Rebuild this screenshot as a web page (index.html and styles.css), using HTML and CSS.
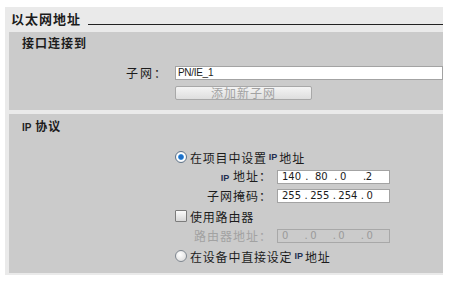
FILE: index.html
```html
<!DOCTYPE html>
<html lang="zh-CN">
<head>
  <meta charset="UTF-8">
  <meta name="viewport" content="width=device-width, initial-scale=1.0">
  <title>以太网地址</title>
  <link rel="stylesheet" href="styles.css">
</head>
<body>
  <div class="panel">
    <div class="legend">
      <span class="legend-title">以太网地址</span>
      <span class="legend-line"></span>
    </div>

    <section class="group group-port">
      <div class="group-title">接口连接到</div>
      <div class="subnet-row">
        <span class="subnet-label">子网：</span>
        <div class="text-input wide">PN/IE_1</div>
      </div>
      <div class="add-btn">添加新子网</div>
    </section>

    <section class="group group-ip">
      <div class="group-title"><span class="ip">IP</span> 协议</div>
      <div class="options">
        <div class="choice"><span class="radio checked"></span>在项目中设置 <span class="ip">IP</span> 地址</div>
        <div class="field">
          <span class="field-label"><span class="ip">IP</span> 地址：</span>
          <div class="ip-input">
            <span class="seg">140</span><span class="dot">.</span>
            <span class="seg seg-shift">80</span><span class="dot">.</span>
            <span class="seg">0</span><span class="dot">.</span>
            <span class="seg seg-tight">2</span>
          </div>
        </div>
        <div class="field">
          <span class="field-label">子网掩码：</span>
          <div class="ip-input">
            <span class="seg">255</span><span class="dot">.</span>
            <span class="seg">255</span><span class="dot">.</span>
            <span class="seg">254</span><span class="dot">.</span>
            <span class="seg">0</span>
          </div>
        </div>
        <div class="choice"><span class="checkbox"></span>使用路由器</div>
        <div class="field disabled">
          <span class="field-label">路由器地址：</span>
          <div class="ip-input">
            <span class="seg">0</span><span class="dot">.</span>
            <span class="seg">0</span><span class="dot">.</span>
            <span class="seg">0</span><span class="dot">.</span>
            <span class="seg">0</span>
          </div>
        </div>
        <div class="choice"><span class="radio"></span>在设备中直接设定 <span class="ip">IP</span> 地址</div>
      </div>
    </section>
  </div>
</body>
</html>
```

FILE: styles.css
```css
:root {
  --panel-bg: #eaeaea;
  --group-bg: #cbcbcb;
  --text-color: #1c1c1c;
  --muted: #a2a2a2;
  --field-border: #a3a3a3;
}

body {
  margin: 0;
  background: #fff;
  color: var(--text-color);
  font-family: "Noto Sans CJK SC", "Noto Sans", sans-serif;
  font-size: 12px;
}

.panel {
  margin: 7px 0 0 5px;
  width: 438px;
  padding: 0 0 2px 4px;
  box-sizing: border-box;
  background: var(--panel-bg);
}

/* Titel mit Linie */
.legend {
  display: flex;
  align-items: flex-start;
  height: 25px;
  padding-top: 4px;
  box-sizing: border-box;
}

.legend-title {
  margin-left: 2px;
  font-size: 13px;
  font-weight: bold;
  line-height: 16px;
  letter-spacing: 1px;
}

.legend-line {
  flex: 1;
  height: 1px;
  margin: 13px 0 0 7px;
  background: #222;
}

.group {
  background: var(--group-bg);
}

.group-port {
  padding: 3px 0 10px;
}

.group-ip {
  margin-top: 4px;
  padding: 4px 0 9px;
}

.group-title {
  padding-left: 13px;
  font-weight: bold;
  line-height: 16px;
  letter-spacing: 1px;
}

.ip {
  font-family: "Liberation Sans", Arial, sans-serif;
  font-size: 9px;
  font-weight: bold;
  color: #1f2f52;
  letter-spacing: 0;
}

.group-title .ip {
  font-size: 10px;
  color: #222;
}

.subnet-row {
  display: flex;
  align-items: center;
  margin-top: 15px;
  height: 14px;
}

.subnet-label {
  width: 159px;
  margin-right: 7px;
  text-align: right;
  line-height: 14px;
  letter-spacing: 2px;
}

.text-input {
  height: 14px;
  box-sizing: border-box;
  border: 1px solid var(--field-border);
  background: #fff;
  padding-left: 2px;
  font-family: "Liberation Sans", Arial, sans-serif;
  font-size: 10px;
  line-height: 12px;
  letter-spacing: -0.3px;
}

.text-input.wide {
  flex: 1;
}

.add-btn {
  width: 137px;
  height: 14px;
  margin: 6px 0 0 166px;
  box-sizing: border-box;
  border: 1px solid #a8a8a8;
  border-radius: 2px;
  background: linear-gradient(#f4f4f4, #dedede);
  color: var(--muted);
  text-align: center;
  font-size: 12px;
  line-height: 12px;
  letter-spacing: 1px;
}

.options {
  display: flex;
  flex-direction: column;
  gap: 5px;
  margin: 13px 0 0 166px;
}

.choice {
  display: flex;
  align-items: center;
  height: 16px;
  letter-spacing: 0.8px;
}

.choice .ip {
  margin: 0 2px;
}

.radio,
.checkbox {
  width: 12px;
  height: 12px;
  margin-right: 3px;
  box-sizing: border-box;
  flex: none;
}

.radio {
  border: 1px solid #7f8790;
  border-radius: 50%;
  background: radial-gradient(circle at 40% 35%, #ffffff, #d6d6d6);
}

.radio.checked {
  border-color: #5f7388;
  background: radial-gradient(circle, #1f6fc6 0 2px, #4d9ee6 2.6px, #ffffff 3.3px, #e6ebf0 100%);
}

.checkbox {
  border: 1px solid #7c7c7c;
  border-radius: 1px;
  background: linear-gradient(#fbfbfb, #d7d7d7);
}

.field {
  display: flex;
  align-items: center;
  height: 14px;
}

.field-label {
  width: 97px;
  margin-right: 5px;
  text-align: right;
  line-height: 14px;
  letter-spacing: 1px;
}

.ip-input {
  display: flex;
  width: 113px;
  height: 14px;
  box-sizing: border-box;
  padding-left: 4px;
  border: 1px solid var(--field-border);
  background: #fff;
  font-family: "DejaVu Sans", sans-serif;
  font-size: 10px;
  line-height: 12px;
  white-space: nowrap;
}

.seg {
  width: 24px;
}

.seg-shift {
  padding-left: 4px;
  width: 20px;
}

.seg-tight {
  margin-left: -3px;
}

.dot {
  width: 6px;
}

.field.disabled .field-label {
  color: var(--muted);
}

.field.disabled .ip-input {
  background: var(--group-bg);
  border-color: #a8a8a8;
  color: #9a9a9a;
}
```
